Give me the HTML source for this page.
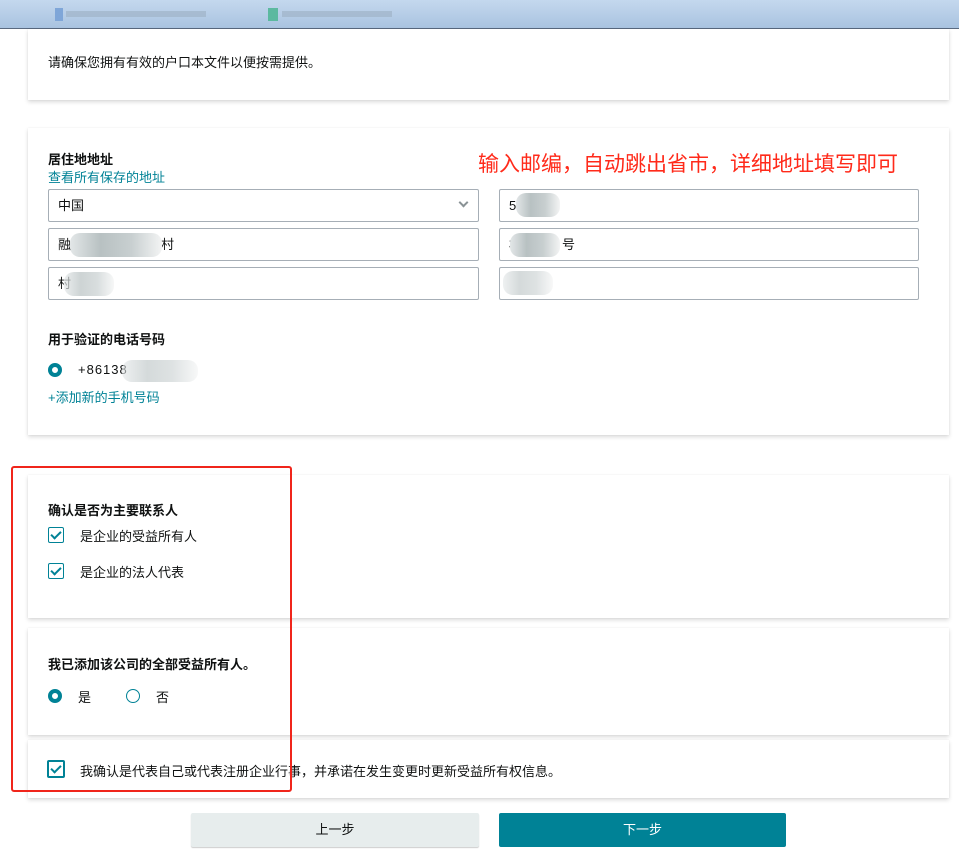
<!DOCTYPE html>
<html><head><meta charset="utf-8"><style>
*{box-sizing:border-box;margin:0;padding:0}
body{width:959px;height:862px;background:#fff;position:relative;overflow:hidden;font-family:"Liberation Sans","Noto Sans CJK SC",sans-serif;font-size:13px;color:#0f1111}
.a{position:absolute}
.card{position:absolute;left:28px;width:921px;background:#fff;box-shadow:0 2px 4px rgba(0,0,0,.15),0 0 1px rgba(0,0,0,.08)}
.inp{position:absolute;height:33px;border:1px solid #a6aeb6;border-radius:2px;background:#fff;padding:0 9px;line-height:31px}
.b{font-weight:bold}
.link{color:#008296}
.blur{position:absolute;border-radius:10px;background:linear-gradient(90deg,#e3e7e8,#b8c1c2,#c8cfd0,#f3f4f4)}
.cb{position:absolute;width:16px;height:16px;border:1.5px solid #008296;border-radius:2px}
.cb:after{content:"";position:absolute;left:4px;top:1px;width:4px;height:8px;border:solid #008296;border-width:0 2px 2px 0;transform:rotate(45deg)}
.rd{position:absolute;width:14px;height:14px;border-radius:50%;border:4px solid #008296}
.ro{position:absolute;width:14px;height:14px;border-radius:50%;border:1px solid #008296}
</style></head><body>
<div class="a" style="left:0;top:0;width:959px;height:29px;background:linear-gradient(#c4d8ee,#a9c3e0);border-bottom:1px solid #5a6a80"></div>
<div class="a" style="left:55px;top:8px;width:8px;height:13px;background:#7fa6d8"></div>
<div class="a" style="left:66px;top:11px;width:140px;height:6px;background:#a0b3c8;opacity:.7"></div>
<div class="a" style="left:268px;top:8px;width:10px;height:13px;background:#5cb9a0"></div>
<div class="a" style="left:282px;top:11px;width:110px;height:6px;background:#a0b3c8;opacity:.7"></div>

<div class="card" style="top:29px;height:71px"></div>
<div class="a" style="left:48px;top:52px">请确保您拥有有效的户口本文件以便按需提供。</div>

<div class="card" style="top:128px;height:307px"></div>
<div class="a b" style="left:48px;top:149px">居住地地址</div>
<div class="a link" style="left:48px;top:167px">查看所有保存的地址</div>
<div class="a" style="left:478px;top:151px;color:#ff2a1a;font-size:21px;line-height:28px">输入邮编，自动跳出省市，详细地址填写即可</div>
<div class="inp" style="left:48px;top:189px;width:431px">中国</div>
<div class="a" style="left:460px;top:199px;width:7px;height:7px;border:solid #8a9396;border-width:0 2px 2px 0;transform:rotate(45deg)"></div>
<div class="inp" style="left:499px;top:189px;width:420px">5</div>
<div class="blur" style="left:516px;top:193px;width:44px;height:24px"></div>
<div class="inp" style="left:48px;top:228px;width:431px">融<span style="margin-left:90px">村</span></div>
<div class="blur" style="left:70px;top:233px;width:92px;height:24px"></div>
<div class="inp" style="left:499px;top:228px;width:420px">村<span style="margin-left:40px">号</span></div>
<div class="blur" style="left:510px;top:233px;width:50px;height:24px"></div>
<div class="inp" style="left:48px;top:267px;width:431px">村</div>
<div class="blur" style="left:64px;top:272px;width:50px;height:24px;opacity:.7"></div>
<div class="inp" style="left:499px;top:267px;width:420px"></div>
<div class="blur" style="left:503px;top:271px;width:50px;height:24px;opacity:.6"></div>
<div class="a b" style="left:48px;top:329px">用于验证的电话号码</div>
<div class="rd" style="left:48px;top:363px"></div>
<div class="a" style="left:78px;top:362px;letter-spacing:1px">+86138</div>
<div class="blur" style="left:122px;top:360px;width:76px;height:22px;opacity:.6"></div>
<div class="a link" style="left:48px;top:387px">+添加新的手机号码</div>

<div class="card" style="top:475px;height:143px"></div>
<div class="a b" style="left:48px;top:500px">确认是否为主要联系人</div>
<div class="cb" style="left:48px;top:527px"></div>
<div class="a" style="left:80px;top:526px">是企业的受益所有人</div>
<div class="cb" style="left:48px;top:563px"></div>
<div class="a" style="left:80px;top:562px">是企业的法人代表</div>

<div class="card" style="top:628px;height:107px"></div>
<div class="a b" style="left:48px;top:654px">我已添加该公司的全部受益所有人。</div>
<div class="rd" style="left:48px;top:689px"></div>
<div class="a" style="left:78px;top:687px">是</div>
<div class="ro" style="left:126px;top:689px"></div>
<div class="a" style="left:156px;top:687px">否</div>

<div class="card" style="top:740px;height:58px"></div>
<div class="cb" style="left:47px;top:760px;width:18px;height:18px;border-width:2px"></div>
<div class="a" style="left:80px;top:761px">我确认是代表自己或代表注册企业行事，并承诺在发生变更时更新受益所有权信息。</div>

<div class="a" style="left:11px;top:466px;width:281px;height:326px;border:2px solid #f0251b;border-radius:3px"></div>

<div class="a" style="left:191px;top:813px;width:288px;height:34px;background:#e7eded;border-radius:2px;box-shadow:0 1px 1px rgba(0,0,0,.2);text-align:center;line-height:34px">上一步</div>
<div class="a" style="left:499px;top:813px;width:287px;height:34px;background:#008296;border-radius:2px;color:#fff;text-align:center;line-height:34px">下一步</div>
</body></html>
